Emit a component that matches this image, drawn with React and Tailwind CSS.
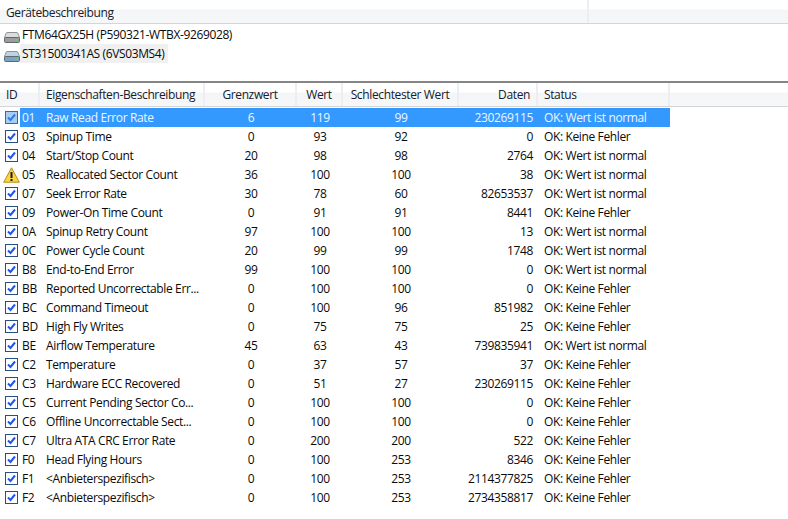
const columns = "grid-cols-[40px_165px_92px_46px_116px_79px_132px]";

const rows = [
  ["01", "Raw Read Error Rate", "6", "119", "99", "230269115", "OK: Wert ist normal"],
  ["03", "Spinup Time", "0", "93", "92", "0", "OK: Keine Fehler"],
  ["04", "Start/Stop Count", "20", "98", "98", "2764", "OK: Wert ist normal"],
  ["05", "Reallocated Sector Count", "36", "100", "100", "38", "OK: Wert ist normal"],
  ["07", "Seek Error Rate", "30", "78", "60", "82653537", "OK: Wert ist normal"],
  ["09", "Power-On Time Count", "0", "91", "91", "8441", "OK: Keine Fehler"],
  ["0A", "Spinup Retry Count", "97", "100", "100", "13", "OK: Wert ist normal"],
  ["0C", "Power Cycle Count", "20", "99", "99", "1748", "OK: Wert ist normal"],
  ["B8", "End-to-End Error", "99", "100", "100", "0", "OK: Wert ist normal"],
  ["BB", "Reported Uncorrectable Err...", "0", "100", "100", "0", "OK: Keine Fehler"],
  ["BC", "Command Timeout", "0", "100", "96", "851982", "OK: Keine Fehler"],
  ["BD", "High Fly Writes", "0", "75", "75", "25", "OK: Keine Fehler"],
  ["BE", "Airflow Temperature", "45", "63", "43", "739835941", "OK: Wert ist normal"],
  ["C2", "Temperature", "0", "37", "57", "37", "OK: Keine Fehler"],
  ["C3", "Hardware ECC Recovered", "0", "51", "27", "230269115", "OK: Keine Fehler"],
  ["C5", "Current Pending Sector Co...", "0", "100", "100", "0", "OK: Keine Fehler"],
  ["C6", "Offline Uncorrectable Sect...", "0", "100", "100", "0", "OK: Keine Fehler"],
  ["C7", "Ultra ATA CRC Error Rate", "0", "200", "200", "522", "OK: Keine Fehler"],
  ["F0", "Head Flying Hours", "0", "100", "253", "8346", "OK: Keine Fehler"],
  ["F1", "<Anbieterspezifisch>", "0", "100", "253", "2114377825", "OK: Keine Fehler"],
  ["F2", "<Anbieterspezifisch>", "0", "100", "253", "2734358817", "OK: Keine Fehler"],
];

function DriveIcon({ blue }) {
  return (
    <svg width="16" height="11" viewBox="0 0 16 11" className="mt-[5px] shrink-0">
      <path d="M3 0.5h10c1 0 1.5 2.5 2.5 5v2h-15v-2C1.500 3 2 0.500 3 0.500z" fill={blue ? "#bcd3e6" : "#dcdcdc"} stroke="#8e9397" />
      <rect x="0.500" y="5.500" width="15" height="5" rx="1" fill={blue ? "#7ba3c2" : "#9a9c9e"} stroke="#63686c" />
      <rect x="11" y="7" width="3" height="2" fill="#66cc66" />
    </svg>
  );
}

function CheckIcon({ selected }) {
  return (
    <svg width="13" height="13" viewBox="0 0 13 13" className="shrink-0">
      <rect x="0.500" y="0.500" width="12" height="12" fill={selected ? "#a8cdf5" : "#fdfdfd"} stroke={selected ? "#3d6a9c" : "#27507e"} />
      <path d="M3 6.500l2.500 2.500L10 3.500" fill="none" stroke={selected ? "#2f7ce0" : "#1f55ee"} strokeWidth="2" />
    </svg>
  );
}

function WarningIcon() {
  return (
    <svg width="17" height="16" viewBox="0 0 17 16" className="shrink-0">
      <path d="M8.500 0.800L16.300 15.200H0.700z" fill="#f8d642" stroke="#b98a14" strokeLinejoin="round" />
      <rect x="7.500" y="5" width="2" height="6" fill="#1d1d1d" />
      <rect x="7.500" y="12" width="2" height="2" fill="#1d1d1d" />
    </svg>
  );
}

function HeaderCell({ children, className = "" }) {
  return (
    <div className={`flex items-center whitespace-nowrap border-r-2 border-[#eceeef] px-[6px] text-[#15202e] ${className}`}>
      {children}
    </div>
  );
}

function Row({ row, index }) {
  const selected = index === 0;
  const warning = row[0] === "05";
  const cell = selected ? "bg-[#3399ff]" : "";
  return (
    <div className={`grid h-[19px] ${columns} items-center whitespace-nowrap ${selected ? "text-[#eef6ff]" : "text-[#0a0a0a]"}`}>
      <div className="flex h-full items-center">
        <div className={`flex items-center ${warning ? "ml-[3px] w-[17px]" : "ml-[5px] w-[15px]"}`}>
          {warning ? <WarningIcon /> : <CheckIcon selected={selected} />}
        </div>
        <div className={`flex h-full flex-1 items-center pl-[2px] ${cell}`}>{row[0]}</div>
      </div>
      <div className={`flex h-full items-center overflow-hidden pl-[6px] ${cell}`}>{row[1]}</div>
      <div className={`flex h-full items-center justify-center ${cell}`}>{row[2]}</div>
      <div className={`flex h-full items-center justify-center ${cell}`}>{row[3]}</div>
      <div className={`flex h-full items-center justify-center ${cell}`}>{row[4]}</div>
      <div className={`flex h-full items-center justify-end pr-[5px] ${cell}`}>{row[5]}</div>
      <div className={`flex h-full items-center pl-[6px] ${cell}`}>{row[6]}</div>
    </div>
  );
}

export default function App() {
  return (
    <div className="h-[519px] w-[788px] overflow-hidden bg-white text-[12px] font-['Open_Sans',sans-serif] tracking-[-0.37px]">
      {/* Geraeteliste */}
      <div className="flex h-[24px] border-b border-[#d5d5d5] bg-[linear-gradient(#ffffff_0,#ffffff_9px,#f4f5f6_10px,#f6f7f8_100%)] text-[#15202e]">
        <div className="flex w-[589px] items-center border-r-2 border-[#eceeef] pl-[6px] pt-[2px]">Gerätebeschreibung</div>
      </div>
      <div className="h-[57px] whitespace-nowrap pl-[4px] pt-[1px] text-[#0a0a0a]">
        <div className="flex h-[19px] items-center">
          <DriveIcon />
          <span className="pl-[2px]">FTM64GX25H (P590321-WTBX-9269028)</span>
        </div>
        <div className="flex h-[19px] items-center">
          <DriveIcon blue />
          <span className="flex h-full w-[148px] items-center bg-[#f0f0f0] pl-[2px]">ST31500341AS (6VS03MS4)</span>
        </div>
      </div>

      <div className="h-[2px] bg-[#858585]" />

      {/* SMART Tabelle */}
      <div className="h-[24px] border-b border-[#d5d5d5] bg-[linear-gradient(#ffffff_0,#ffffff_9px,#f4f5f6_10px,#f6f7f8_100%)]">
        <div className={`grid h-full ${columns}`}>
          <HeaderCell>ID</HeaderCell>
          <HeaderCell>Eigenschaften-Beschreibung</HeaderCell>
          <HeaderCell className="justify-center">Grenzwert</HeaderCell>
          <HeaderCell className="justify-center">Wert</HeaderCell>
          <HeaderCell className="justify-center">Schlechtester Wert</HeaderCell>
          <HeaderCell className="justify-end">Daten</HeaderCell>
          <HeaderCell>Status</HeaderCell>
        </div>
      </div>
      <div className="pt-[1px]">
        {rows.map((row, i) => (
          <Row key={row[0]} row={row} index={i} />
        ))}
      </div>
    </div>
  );
}
